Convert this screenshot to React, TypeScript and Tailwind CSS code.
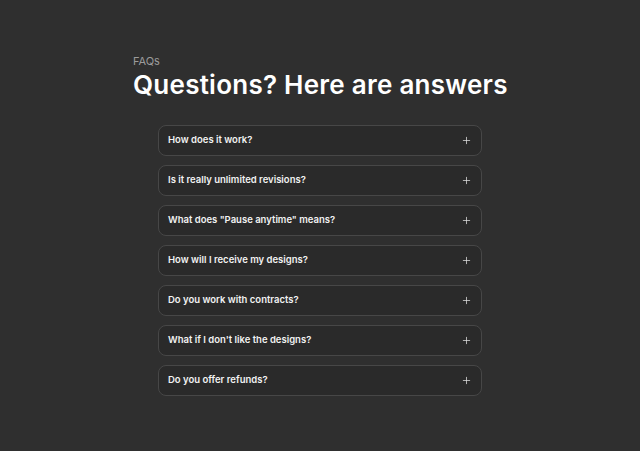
import { Plus } from 'lucide-react';

const faqs = [
  'How does it work?',
  'Is it really unlimited revisions?',
  'What does "Pause anytime" means?',
  'How will I receive my designs?',
  'Do you work with contracts?',
  "What if I don't like the designs?",
  'Do you offer refunds?',
];

export default function App() {
  return (
    <div className="min-h-[451px] bg-[#2f2f2f] font-['Inter',sans-serif] text-white">
      <div className="pt-[54px] pl-[133px]">
        <p className="text-[11px] leading-[14px] text-[#9b9b9b]">FAQs</p>
        <h1 className="mt-[1px] text-[26px] font-semibold leading-[32px] tracking-[0.25px]">
          Questions? Here are answers
        </h1>
      </div>

      <div className="mt-[24px] ml-[158px] flex w-[324px] flex-col gap-[9px]">
        {faqs.map((q) => (
          <button
            key={q}
            className="flex h-[31px] items-center justify-between rounded-[8px] border border-[#474747] bg-[#2a2a2a] pl-[9px] pr-[9px] text-left"
          >
            <span className="text-[9.5px] font-semibold text-[#f2f2f2]">{q}</span>
            <Plus className="h-[11px] w-[11px] text-[#e5e5e5]" strokeWidth={1.6} />
          </button>
        ))}
      </div>
    </div>
  );
}
